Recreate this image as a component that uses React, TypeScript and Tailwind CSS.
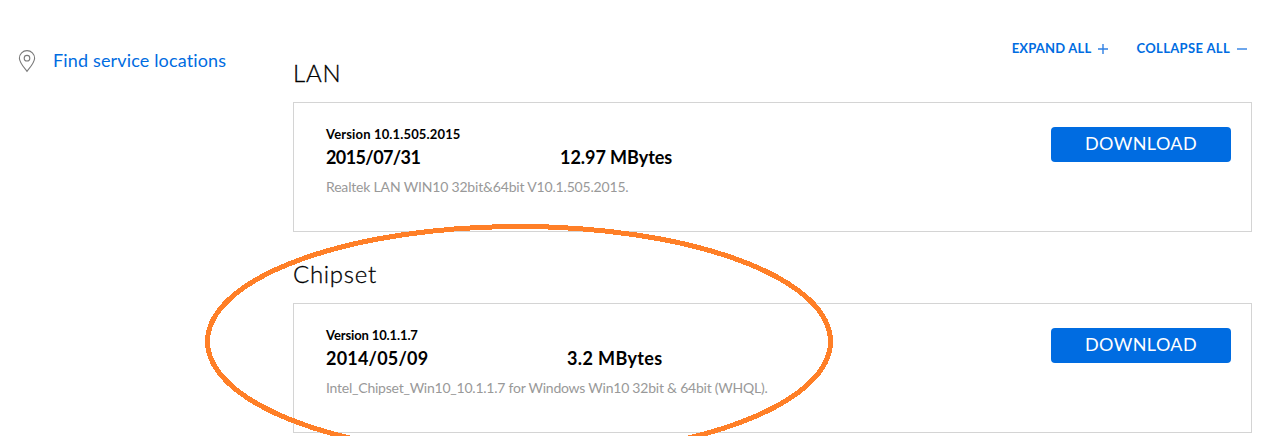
import clsx from 'clsx';

interface DriverFile {
  category: string;
  version: string;
  date: string;
  size: string;
  description: string;
  spacing: {
    category: string;
    version: string;
    date: string;
    size: string;
    description: string;
  };
}

const drivers: DriverFile[] = [
  {
    category: 'LAN',
    version: 'Version 10.1.505.2015',
    date: '2015/07/31',
    size: '12.97 MBytes',
    description: 'Realtek LAN WIN10 32bit&64bit V10.1.505.2015.',
    spacing: {
      category: 'tracking-[0.8px]',
      version: 'tracking-[0.15px]',
      date: 'tracking-[-0.6px]',
      size: 'ml-[140px] tracking-[-0.05px]',
      description: 'tracking-[-0.18px]',
    },
  },
  {
    category: 'Chipset',
    version: 'Version 10.1.1.7',
    date: '2014/05/09',
    size: '3.2 MBytes',
    description: 'Intel_Chipset_Win10_10.1.1.7 for Windows Win10 32bit & 64bit (WHQL).',
    spacing: {
      category: 'tracking-[0.7px]',
      version: 'tracking-[-0.12px]',
      date: 'tracking-[0.2px]',
      size: 'ml-[147px] tracking-[0.38px]',
      description: 'tracking-[-0.23px]',
    },
  },
];

function PinIcon() {
  return (
    <svg className="h-[24px] w-[18px]" viewBox="0 0 18 24" fill="none" stroke="#7a7a7a" strokeWidth="1.1">
      <path d="M9 22.3C6.6 19.2 1.4 13.6 1.4 9.2a7.6 7.6 0 0 1 15.2 0c0 4.4-5.2 10-7.6 13.1Z" />
      <circle cx="9" cy="9.2" r="2.8" />
    </svg>
  );
}

function DriverCard({ driver }: { driver: DriverFile }) {
  return (
    <section className="mb-7">
      <h2
        className={clsx(
          'h-[43px] text-[24px] leading-7 font-light whitespace-nowrap [-webkit-text-stroke:0.3px_black]',
          driver.spacing.category,
        )}
      >
        {driver.category}
      </h2>
      <div className="flex h-[130px] justify-between border border-[#d4d4d4] pt-[23px] pr-5 pl-8">
        <div className="whitespace-nowrap">
          <p className={clsx('text-[13px] leading-4 font-bold', driver.spacing.version)}>{driver.version}</p>
          <div className="flex pt-px text-[18px] leading-7 font-bold">
            <span className={clsx('w-[94px]', driver.spacing.date)}>{driver.date}</span>
            <span className={driver.spacing.size}>{driver.size}</span>
          </div>
          <p className={clsx('mt-[6px] text-[14px] leading-5 text-[#999]', driver.spacing.description)}>
            {driver.description}
          </p>
        </div>
        <button className="mt-px h-[35px] w-[180px] rounded bg-[#006ce1] pb-0.5 text-[18px] tracking-[0.4px] text-white">
          DOWNLOAD
        </button>
      </div>
    </section>
  );
}

export default function App() {
  return (
    <div className="relative flex h-[436px] w-[1262px] overflow-hidden bg-white font-[Lato,sans-serif] text-black">
      <aside className="w-[293px] shrink-0 pt-12 pl-[18px]">
        <a className="flex items-center gap-[17px] text-[18px] leading-6 whitespace-nowrap text-[#006ce1]">
          <PinIcon />
          <span className="pb-0.5 tracking-[0.15px]">Find service locations</span>
        </a>
      </aside>
      <main className="w-[959px] shrink-0 pt-[39px]">
        <div className="flex h-5 items-center justify-end pr-1 text-[13px] font-bold text-[#006ce1]">
          <span className="tracking-[0.2px]">EXPAND ALL</span>
          <svg className="ml-[6px] h-3 w-3" viewBox="0 0 12 12" stroke="#2f80e4" strokeWidth="1.4">
            <path d="M1 6h10M6 1v10" />
          </svg>
          <span className="ml-[27px] tracking-[0.35px]">COLLAPSE ALL</span>
          <svg className="ml-[6px] h-3 w-3" viewBox="0 0 12 12" stroke="#2f80e4" strokeWidth="1.4">
            <path d="M1 6h10" />
          </svg>
        </div>
        {drivers.map((driver) => (
          <DriverCard key={driver.category} driver={driver} />
        ))}
      </main>
      {/* hand-drawn marker around the chipset driver */}
      <svg
        className="pointer-events-none absolute top-0 left-0 h-[436px] w-[1262px]"
        viewBox="0 0 1262 436"
        fill="none"
        shapeRendering="crispEdges"
      >
        <ellipse cx="519" cy="341.5" rx="311.5" ry="115" stroke="#ff7f27" strokeWidth="5" />
      </svg>
    </div>
  );
}
